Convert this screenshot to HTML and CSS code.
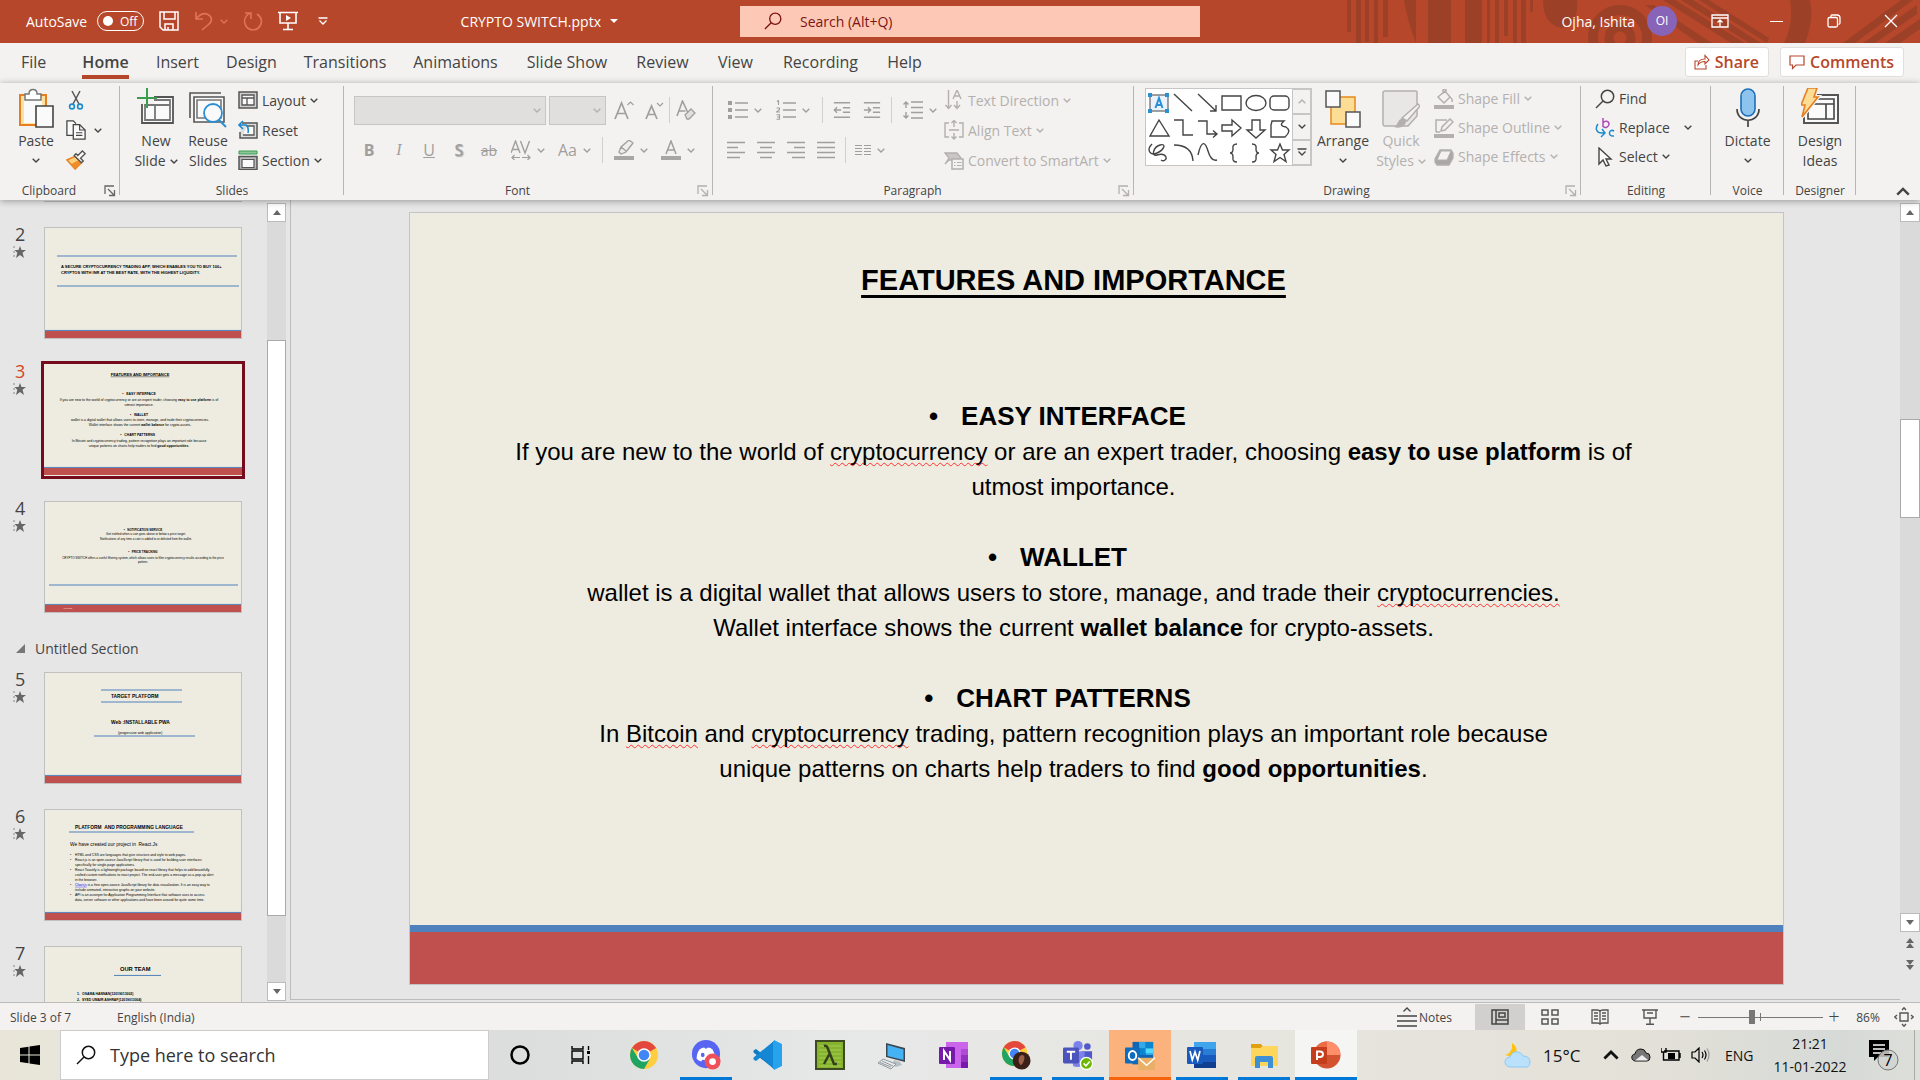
FILE: index.html
```html
<!DOCTYPE html>
<html lang="en">
<head>
<meta charset="utf-8">
<title>CRYPTO SWITCH.pptx - PowerPoint</title>
<link rel="stylesheet" href="styles.css">
</head>
<body>
<svg class="sprite" aria-hidden="true">
  <symbol id="chev" viewBox="0 0 8 5"><path d="M.7.7 4 4 7.3.7" fill="none" stroke="currentColor" stroke-width="1.4"/></symbol>
  <symbol id="launch" viewBox="0 0 12 12"><path d="M1 9V1h9M4 4l6 6M10.500 5v5.500H5" fill="none" stroke="currentColor" stroke-width="1.300"/></symbol>
  <symbol id="save" viewBox="0 0 20 20"><path d="M1 1h18v18H4l-3-3zM5 1v7h11V1M6 19v-6h8v6M9 19v-3" fill="none" stroke="currentColor" stroke-width="1.500"/></symbol>
  <symbol id="undo" viewBox="0 0 20 20"><path d="M2 1v7h7M2 8C6 3 10 2 13 3c5 2 6 7 2 10l-7 6" fill="none" stroke="currentColor" stroke-width="1.600"/></symbol>
  <symbol id="redo" viewBox="0 0 20 20"><path d="M2 2h6v6M7 2C2 5 0 10 3 15s11 5 14 0 1-9-3-12" fill="none" stroke="currentColor" stroke-width="1.600"/></symbol>
  <symbol id="present" viewBox="0 0 20 20"><path d="M0 1.500h20M2 2v10h16V2M10 12v6M5 18.500h10" fill="none" stroke="currentColor" stroke-width="1.600"/><path d="M8 4l5 3-5 3z" fill="currentColor"/></symbol>
  <symbol id="custom" viewBox="0 0 10 8"><path d="M.5 1h9M1.500 3.500 5 7l3.500-3.500" fill="none" stroke="currentColor" stroke-width="1.300"/></symbol>
  <symbol id="glass" viewBox="0 0 20 20"><circle cx="12.500" cy="7.500" r="6.200" fill="none" stroke="currentColor" stroke-width="1.500"/><path d="M8 12l-7 7" stroke="currentColor" stroke-width="1.500"/></symbol>
  <symbol id="ribbonopt" viewBox="0 0 18 14"><path d="M1 1h16v12H1zM1 4h16M9 12V6M6.500 8.500 9 6l2.500 2.500" fill="none" stroke="currentColor" stroke-width="1.300"/></symbol>
  <symbol id="restore" viewBox="0 0 14 14"><rect x="1" y="3.500" width="9.500" height="9.500" rx="1.500" fill="none" stroke="currentColor" stroke-width="1.300"/><path d="M4 3V2q0-1 1-1h5q3 0 3 3v5q0 1-1.500 1.500" fill="none" stroke="currentColor" stroke-width="1.300"/></symbol>
  <symbol id="close" viewBox="0 0 14 14"><path d="M1 1l12 12M13 1 1 13" stroke="currentColor" stroke-width="1.300"/></symbol>
  <symbol id="share" viewBox="0 0 16 16"><path d="M4 7H1v8h11v-4M4 11c0-5 3-6 7-6V1.500L15 6l-4 4V7.500C8 7.500 6 8 4 11z" fill="none" stroke="currentColor" stroke-width="1.100"/></symbol>
  <symbol id="comment" viewBox="0 0 16 16"><path d="M1 2h14v9H7l-3.500 3.500V11H1z" fill="none" stroke="currentColor" stroke-width="1.200"/></symbol>

  <symbol id="paste" viewBox="0 0 36 40"><path d="M2 7h26v30H2z" fill="#fbe2a0" stroke="#e67e22" stroke-width="2"/><path d="M6 10h18v25H6z" fill="#fafafa"/><path d="M7 12V6h4c0-6 8-6 8 0h4v6z" fill="#fff" stroke="#777" stroke-width="1.500"/><path d="M18 18h17v21H18z" fill="#fafafa" stroke="#444" stroke-width="1.600"/></symbol>
  <symbol id="cut" viewBox="0 0 20 20"><path d="M6 1l7 13M14 1 7 14" stroke="#555" stroke-width="1.500"/><g fill="none" stroke="#1e8bcd" stroke-width="1.600"><circle cx="6" cy="16.500" r="2.400"/><circle cx="14" cy="16.500" r="2.400"/></g></symbol>
  <symbol id="copy" viewBox="0 0 22 22"><path d="M8 17H1V1h7l3 3" fill="#fafafa" stroke="#444" stroke-width="1.400"/><path d="M8 5h7l6 6v10H8z" fill="#fafafa" stroke="#444" stroke-width="1.400"/><path d="M15 5v6h6M11 14h7M11 17h7" fill="none" stroke="#444" stroke-width="1.300"/></symbol>
  <symbol id="brush" viewBox="0 0 22 22"><path d="M1 11l9-4 7 7-7 7z" fill="#fbd27c" stroke="#e67e22" stroke-width="1.600"/><path d="M5 16l5 5 7-7-3-3z" fill="#f28c28"/><path d="M9 6l8 8 2-2-3-3 5-5-3-3-5 5-2-2z" fill="#fafafa" stroke="#555" stroke-width="1.500"/></symbol>
  <symbol id="newslide" viewBox="0 0 38 40"><path d="M5 9h31v26H5z" fill="#fafafa" stroke="#555" stroke-width="1.800"/><path d="M8 12h25v20H8zM8 17h25M18 17v15" fill="none" stroke="#777" stroke-width="1.800"/><path d="M3 6h14v10H3z" fill="#f3f2f1"/><path d="M10 0v20M0 10h20" stroke="#3a9d50" stroke-width="2"/></symbol>
  <symbol id="reuse" viewBox="0 0 38 40"><path d="M1 30V5h31" fill="none" stroke="#555" stroke-width="1.600"/><path d="M5 9h30v25H5z" fill="#fafafa" stroke="#555" stroke-width="1.600"/><path d="M8 12h24v18H8z" fill="none" stroke="#777" stroke-width="1.600"/><circle cx="24" cy="25" r="9" fill="#fafafa" stroke="#2b8fd4" stroke-width="1.800"/><path d="M30 32l7 7" stroke="#2b8fd4" stroke-width="2"/></symbol>
  <symbol id="layout" viewBox="0 0 20 20"><path d="M1 2h18v16H1z" fill="#d0d0d0" stroke="#555" stroke-width="1.500"/><path d="M4 5h12v10H4zM4 8h12M9 8v7" fill="#fafafa" stroke="#555" stroke-width="1.300"/></symbol>
  <symbol id="reset" viewBox="0 0 20 20"><path d="M4 3h15v15H2v-6" fill="#ddd" stroke="#555" stroke-width="1.500"/><path d="M9 6h7v9H5" fill="#fafafa" stroke="#555" stroke-width="1.300"/><path d="M1 5h7q3 2 2 8M5 1 1 5l4 4" fill="none" stroke="#1e8bcd" stroke-width="1.600"/></symbol>
  <symbol id="section" viewBox="0 0 20 20"><path d="M1 1h18v3H1z" fill="#8cc79a" stroke="#3a9d50"/><path d="M1 6.500h18v13H1z" fill="#bbb" stroke="#555" stroke-width="1.500"/><path d="M4 9.500h12v8H4z" fill="#fafafa" stroke="#555" stroke-width="1.200"/></symbol>
  <symbol id="grow" viewBox="0 0 20 20"><path d="M1 19 7.500 3 14 19M3.500 13.500h8" fill="none" stroke="currentColor" stroke-width="1.700"/><path d="M13.500 5 16.500 2l3 3" fill="none" stroke="currentColor" stroke-width="1.200"/></symbol>
  <symbol id="shrink" viewBox="0 0 20 20"><path d="M2 19 7.500 6 13 19M4 14.500h7" fill="none" stroke="currentColor" stroke-width="1.700"/><path d="M13 3l3 3 3-3" fill="none" stroke="currentColor" stroke-width="1.200"/></symbol>
  <symbol id="erase" viewBox="0 0 20 20"><path d="M1 16 6.500 1 12 13M3.500 11h6" fill="none" stroke="currentColor" stroke-width="1.600"/><path d="M9 15l6-6 4 4-6 6h-2z" fill="#e0e0e0" stroke="currentColor" stroke-width="1.300"/></symbol>
  <symbol id="spacing" viewBox="0 0 20 20"><path d="M0 13 4.500 1 9 13M1.500 9.500h6M9.500 1 14 13 18.500 1" fill="none" stroke="currentColor" stroke-width="1.400"/><path d="M1 17.500h8M11 17.500h8M3.500 15 1 17.500 3.500 20M16.500 15l2.500 2.500-2.500 2.500" fill="none" stroke="currentColor" stroke-width="1.200"/></symbol>
  <symbol id="marker" viewBox="0 0 20 20"><path d="M0 16h20v4H0z" fill="#a8a6a4"/><path d="M5 12l2-5 8-7 4 3-7 9-5 2zM7 7l5 4" fill="#eee" stroke="currentColor" stroke-width="1.300"/></symbol>
  <symbol id="fontcolor" viewBox="0 0 20 20"><path d="M0 16h20v4H0z" fill="#a8a6a4"/><path d="M5 14 10 1l5 13M6.500 10h7" fill="none" stroke="currentColor" stroke-width="1.500"/></symbol>
  <symbol id="bullets" viewBox="0 0 20 20"><path d="M7 3h13M7 10h13M7 17h13" stroke="currentColor" stroke-width="1.700"/><path d="M0 1h4v4H0zM0 8h4v4H0zM0 15h4v4H0z" fill="currentColor"/></symbol>
  <symbol id="numbers" viewBox="0 0 20 20"><path d="M7 3h13M7 10h13M7 17h13" stroke="currentColor" stroke-width="1.700"/><path d="M1 1.500 2.500.5V5M.5 8h3v1.500L.5 12h3.500M.5 14.800h3v4.500h-3M1 17h2.500" fill="none" stroke="currentColor" stroke-width="1.100"/></symbol>
  <symbol id="outdent" viewBox="0 0 20 20"><path d="M1 2h18M11 7.500h8M11 12.500h8M1 18h18M1.500 10H9M4.500 7l-3 3 3 3" fill="none" stroke="currentColor" stroke-width="1.600"/></symbol>
  <symbol id="indent" viewBox="0 0 20 20"><path d="M1 2h18M11 7.500h8M11 12.500h8M1 18h18M1 10h7.500M5.500 7l3 3-3 3" fill="none" stroke="currentColor" stroke-width="1.600"/></symbol>
  <symbol id="linesp" viewBox="0 0 20 20"><path d="M8 2h12M8 7.500h12M8 12.500h12M8 18h12M3 2v6M3 12v6M.5 4.500 3 2l2.500 2.500M.5 15.500 3 18l2.500-2.500" fill="none" stroke="currentColor" stroke-width="1.400"/></symbol>
  <symbol id="al" viewBox="0 0 18 18"><path d="M0 1.500h18M0 6.500h11M0 11.500h18M0 16.500h13" stroke="currentColor" stroke-width="1.700"/></symbol>
  <symbol id="ac" viewBox="0 0 18 18"><path d="M0 1.500h18M3 6.500h12M0 11.500h18M3 16.500h12" stroke="currentColor" stroke-width="1.700"/></symbol>
  <symbol id="ar" viewBox="0 0 18 18"><path d="M0 1.500h18M7 6.500h11M0 11.500h18M5 16.500h13" stroke="currentColor" stroke-width="1.700"/></symbol>
  <symbol id="aj" viewBox="0 0 18 18"><path d="M0 1.500h18M0 6.500h18M0 11.500h18M0 16.500h18" stroke="currentColor" stroke-width="1.700"/></symbol>
  <symbol id="cols" viewBox="0 0 16 12"><path d="M0 1.500h7M9 1.500h7M0 4.500h7M9 4.500h7M0 7.500h7M9 7.500h7M0 10.500h7M9 10.500h7" stroke="currentColor" stroke-width="1.200"/></symbol>
  <symbol id="textdir" viewBox="0 0 20 20"><path d="M4.500 0v18M1.500 15l3 3.500 3-3.500M13 11v7M10 15l3 3.500 3-3.500M9 9l4-9 4 9M10.500 6h5" fill="none" stroke="currentColor" stroke-width="1.400"/></symbol>
  <symbol id="alignt" viewBox="0 0 20 20"><path d="M5 3H1v14h4M15 3h4v14h-4M10 0v7M7.500 3 10 .5 12.500 3M10 13v6M7.500 16.500 10 19l2.500-2.500M5 10h10" fill="none" stroke="currentColor" stroke-width="1.400"/></symbol>
  <symbol id="smart" viewBox="0 0 20 20"><path d="M1 3h12l4 5-4 2H5L1 14l4-6z" fill="#c9c7c5" stroke="currentColor" stroke-width="1.300"/><path d="M8 9h11v10H8z" fill="#f3f2f1" stroke="currentColor" stroke-width="1.500"/><path d="M10 12.500h1.500M13 12.500h4.500M10 15.500h1.500M13 15.500h4.500" stroke="currentColor" stroke-width="1.200"/></symbol>
  <symbol id="arrange" viewBox="0 0 36 40"><path d="M6 9h24v27H6z" fill="#fbdd95" stroke="#e88a1a" stroke-width="1.500"/><path d="M1 3h14v16H1zM21 24h14v15H21z" fill="#fafafa" stroke="#555" stroke-width="1.500"/></symbol>
  <symbol id="quick" viewBox="0 0 38 40"><path d="M3 3h31q1 0 1 1v24l-9 10H3q-2 0-2-2V5q0-2 2-2z" fill="#e8e7e6" stroke="#b3b0ad" stroke-width="1.500"/><path d="M12 39c4-1 3-8 9-9l3 3c0 5-6 8-12 6z" fill="#b3b0ad"/><path d="M20 30 36 16l2 2-13 15z" fill="#f3f2f1" stroke="#b3b0ad" stroke-width="1.500"/></symbol>
  <symbol id="sfill" viewBox="0 0 20 20"><path d="M0 16h20v4H0z" fill="#b3b0ad"/><path d="M4 8l7-6 5 6-6 6zM9 5V1q2-2 3 0v3M16 8q3 2 2 5" fill="none" stroke="currentColor" stroke-width="1.500"/></symbol>
  <symbol id="sline" viewBox="0 0 20 20"><path d="M0 16h20v4H0z" fill="#b3b0ad"/><path d="M2 14V2h11M2 14h4M7 13l1-4 8-8 3 3-8 8z" fill="none" stroke="currentColor" stroke-width="1.500"/></symbol>
  <symbol id="sfx" viewBox="0 0 20 20"><path d="M6 3h11l2 3v5l-4 7H3l-2-3v-3z" fill="#aaa8a6" stroke="currentColor" stroke-width="1.300"/><path d="M7 4h10l-4 9H3z" fill="#f3f2f1" stroke="currentColor"/></symbol>
  <symbol id="replace" viewBox="0 0 20 20"><g fill="none" stroke-width="1.500"><path d="M8 0v9M8 5c2-3 6-2 6 1s-4 5-6 2" stroke="#b04cb8"/><path d="M19 13c-5-3-7 6 0 5M3 6c-3 4-2 9 4 9H10M7 11l3 4-4 4" stroke="#1e8bcd"/></g></symbol>
  <symbol id="select" viewBox="0 0 20 20"><path d="M4 1v16l4-4 3 6 3-1-3-6h5z" fill="#fafafa" stroke="#444" stroke-width="1.400"/></symbol>
  <symbol id="mic" viewBox="0 0 26 40"><rect x="6" y="1" width="14" height="27" rx="7" fill="#8cc4ee" stroke="#1c6fb8" stroke-width="1.600"/><path d="M2 21c0 15 22 15 22 0M13 32v7" fill="none" stroke="#444" stroke-width="1.700"/></symbol>
  <symbol id="ideas" viewBox="0 0 38 40"><path d="M3 7h34v28H3z" fill="#fafafa" stroke="#555" stroke-width="2"/><path d="M7 11h26v20H7zM12 16h21M25 16v15" fill="none" stroke="#444" stroke-width="1.600"/><path d="M7 0h9l-3 9h4L1 29l3-12H0z" fill="#fbdd95" stroke="#f3f2f1" stroke-width="4"/><path d="M7 0h9l-3 9h4L1 29l3-12H0z" fill="#fbdd95" stroke="#e67e22" stroke-width="1.600"/></symbol>
  <symbol id="star" viewBox="0 0 13 12"><path d="M7 0l1.500 4H13L9.500 6.800 11 12 7 9l-4 3 1.300-5.200L1.500 4h4z" fill="#666"/><path d="M0 1h2M0 6h2M0 10h2" stroke="#888"/></symbol>

  <symbol id="chrome" viewBox="0 0 30 30"><circle cx="15" cy="15" r="14" fill="#ffcd40"/><path d="M15 15 2.900 8A14 14 0 0 1 27.100 8z" fill="#e2483d"/><path d="M2.900 8A14 14 0 0 0 15 29l6-10.500L9 18z" fill="#1fa463"/><circle cx="15" cy="15" r="6.800" fill="#fff"/><circle cx="15" cy="15" r="5.300" fill="#4285f4"/></symbol>
</svg>

<div class="app">
<header class="titlebar">
  <svg class="pattern" viewBox="0 0 575 43" preserveAspectRatio="xMaxYMid slice" aria-hidden="true">
    <g fill="#9c4127"><path d="M2 0h4v32H2zM11 0h5v43h-5zM20 0h4v42h-4zM29 0h4v43h-4zM38 0h5v37h-5zM59 0h12v43Q62 20 59 0zM83 0h23v43H83zM120 0h17v43h-17zM142 0h3v43h-3zM150 0h4v43h-4zM159 0h4v36h-4zM168 0h4v43h-4zM176 0h5v43h-5zM185 0h3v12h-3z"/><path d="M198 0h34q2 25-16 28-18-4-18-28zM300 5h9l58 38h-14zM318 0h12l70 43h-14zM336 0h12l68 43h-12zM354 0h10l60 38-2 5zM445 0h20q4 22-5 43h-21q10-20 6-43zM498 43 556 0h12l-58 43zM518 43 572 5v9L530 43zM540 43l35-24v10l-20 14z"/></g>
    <g fill="none" stroke="#9c4127"><circle cx="275" cy="37" r="27" stroke-width="10"/><circle cx="275" cy="38" r="11" stroke-width="9"/></g>
  </svg>
  <div class="tb-left">
    <label class="autosave" for="autosave">AutoSave</label>
    <button class="toggle" id="autosave"><span class="knob"></span>Off</button>
    <button class="tbtn" aria-label="Save"><svg class="i20"><use href="#save"/></svg></button>
    <button class="tbtn dim" aria-label="Undo"><svg class="i20"><use href="#undo"/></svg><svg class="chev"><use href="#chev"/></svg></button>
    <button class="tbtn dim" aria-label="Redo"><svg class="i20"><use href="#redo"/></svg></button>
    <button class="tbtn" aria-label="From Beginning"><svg class="i20"><use href="#present"/></svg></button>
    <button class="tbtn more" aria-label="Customize"><svg class="i10"><use href="#custom"/></svg></button>
    <button class="docname">CRYPTO SWITCH.pptx<span class="caret"></span></button>
  </div>
  <div class="tsearch"><svg class="i18"><use href="#glass"/></svg><input type="text" aria-label="Search" placeholder="Search (Alt+Q)"></div>
  <div class="tb-right">
    <span class="user">Ojha, Ishita</span><span class="avatar">OI</span>
    <button class="wbtn" aria-label="Ribbon display"><svg class="wopt"><use href="#ribbonopt"/></svg></button>
    <button class="wbtn" aria-label="Minimize"><span class="minus"></span></button>
    <button class="wbtn" aria-label="Restore"><svg class="i14"><use href="#restore"/></svg></button>
    <button class="wbtn" aria-label="Close"><svg class="i14"><use href="#close"/></svg></button>
  </div>
</header>

<nav class="tabs">
  <button class="tab file">File</button><button class="tab active">Home</button><button class="tab">Insert</button><button class="tab">Design</button><button class="tab">Transitions</button><button class="tab">Animations</button><button class="tab">Slide Show</button><button class="tab">Review</button><button class="tab">View</button><button class="tab">Recording</button><button class="tab">Help</button>
  <div class="tab-actions"><button class="action"><svg class="i16"><use href="#share"/></svg>Share</button><button class="action"><svg class="i16"><use href="#comment"/></svg>Comments</button></div>
</nav>

<section class="ribbon">
  <div class="group g-clip">
    <div class="gbody">
      <button class="big w40"><svg class="pic"><use href="#paste"/></svg><span>Paste</span><svg class="chev"><use href="#chev"/></svg></button>
      <div class="rows r30">
        <button class="small" aria-label="Cut"><svg class="i20"><use href="#cut"/></svg></button>
        <button class="small" aria-label="Copy"><svg class="i20"><use href="#copy"/></svg><svg class="chev wide"><use href="#chev"/></svg></button>
        <button class="small" aria-label="Format Painter"><svg class="i20"><use href="#brush"/></svg></button>
      </div>
    </div>
    <div class="glabel">Clipboard<button class="launch" aria-label="Clipboard options"><svg><use href="#launch"/></svg></button></div>
  </div>
  <div class="group g-slides">
    <div class="gbody">
      <button class="big w56"><svg class="pic"><use href="#newslide"/></svg><span>New</span><span>Slide <svg class="chev"><use href="#chev"/></svg></span></button>
      <button class="big w48"><svg class="pic"><use href="#reuse"/></svg><span>Reuse</span><span>Slides</span></button>
      <div class="rows r30">
        <button class="small"><svg class="i20"><use href="#layout"/></svg>Layout<svg class="chev"><use href="#chev"/></svg></button>
        <button class="small"><svg class="i20"><use href="#reset"/></svg>Reset</button>
        <button class="small"><svg class="i20"><use href="#section"/></svg>Section<svg class="chev"><use href="#chev"/></svg></button>
      </div>
    </div>
    <div class="glabel">Slides</div>
  </div>
  <div class="group g-font off">
    <div class="gbody lines">
      <div class="line">
        <button class="combo face" aria-label="Font"><svg class="chev"><use href="#chev"/></svg></button><button class="combo size" aria-label="Font size"><svg class="chev"><use href="#chev"/></svg></button>
        <button class="fb" aria-label="Grow"><svg class="i20"><use href="#grow"/></svg></button><button class="fb" aria-label="Shrink"><svg class="i20"><use href="#shrink"/></svg></button><i class="sep tight"></i><button class="fb narrow" aria-label="Clear"><svg class="i20"><use href="#erase"/></svg></button>
      </div>
      <div class="line">
        <button class="fb b">B</button><button class="fb it">I</button><button class="fb u">U</button><button class="fb s">S</button><button class="fb strike">ab</button><button class="fd" aria-label="Spacing"><svg class="i20"><use href="#spacing"/></svg><svg class="chev"><use href="#chev"/></svg></button><button class="fd">Aa<svg class="chev"><use href="#chev"/></svg></button><i class="sep"></i><button class="fd" aria-label="Highlight"><svg class="i20"><use href="#marker"/></svg><svg class="chev"><use href="#chev"/></svg></button><button class="fd" aria-label="Font color"><svg class="i20"><use href="#fontcolor"/></svg><svg class="chev"><use href="#chev"/></svg></button>
      </div>
    </div>
    <div class="glabel">Font<button class="launch" aria-label="Font options"><svg><use href="#launch"/></svg></button></div>
  </div>
  <div class="group g-para off">
    <div class="gbody">
      <div class="lines">
        <div class="line">
          <button class="fd" aria-label="Bullets"><svg class="i20"><use href="#bullets"/></svg><svg class="chev"><use href="#chev"/></svg></button><button class="fd w50" aria-label="Numbering"><svg class="i20"><use href="#numbers"/></svg><svg class="chev"><use href="#chev"/></svg></button><i class="sep"></i><button class="fb" aria-label="Decrease indent"><svg class="i18"><use href="#outdent"/></svg></button><button class="fb" aria-label="Increase indent"><svg class="i18"><use href="#indent"/></svg></button><i class="sep"></i><button class="fd" aria-label="Line spacing"><svg class="i20"><use href="#linesp"/></svg><svg class="chev"><use href="#chev"/></svg></button>
        </div>
        <div class="line">
          <button class="fb" aria-label="Left"><svg class="i18"><use href="#al"/></svg></button><button class="fb" aria-label="Center"><svg class="i18"><use href="#ac"/></svg></button><button class="fb" aria-label="Right"><svg class="i18"><use href="#ar"/></svg></button><button class="fb" aria-label="Justify"><svg class="i18"><use href="#aj"/></svg></button><i class="sep"></i><button class="fd columns" aria-label="Columns"><svg class="i16"><use href="#cols"/></svg><svg class="chev"><use href="#chev"/></svg></button>
        </div>
      </div>
      <div class="rows r30">
        <button class="small"><svg class="i20"><use href="#textdir"/></svg>Text Direction<svg class="chev"><use href="#chev"/></svg></button>
        <button class="small"><svg class="i20"><use href="#alignt"/></svg>Align Text<svg class="chev"><use href="#chev"/></svg></button>
        <button class="small"><svg class="i20"><use href="#smart"/></svg>Convert to SmartArt<svg class="chev"><use href="#chev"/></svg></button>
      </div>
    </div>
    <div class="glabel">Paragraph<button class="launch" aria-label="Paragraph options"><svg><use href="#launch"/></svg></button></div>
  </div>
  <div class="group g-draw">
    <div class="gbody">
      <div class="gallery">
        <svg class="shapes" viewBox="0 0 146 76" aria-label="Shapes">
          <rect x="4" y="6" width="18" height="16" fill="#eaf3fb" stroke="#444"/><path d="M2 4h4v4H2zM19 4h4v4h-4zM2 20h4v4H2zM19 20h4v4h-4z" fill="#2b8fd4"/><path d="M9.500 19 13 9l3.500 10M10.500 16h5" fill="none" stroke="#2b8fd4" stroke-width="2"/>
          <g fill="none" stroke="#444" stroke-width="1.400"><path d="M28 5l18 17M52 5l18 17M70 16v6h-6"/><path d="M76 7h19v14H76z"/><ellipse cx="110" cy="14" rx="10" ry="7.500"/><rect x="124" y="7" width="19" height="14" rx="4"/><path d="M13 31 4 47h19zM28 31h9v15h10M52 32h9v13h9M67 41.500l4 3.500-4 3.500M76 36h10v-5l9 8-9 8v-5H76zM106 31h8v10h5l-9 8-9-8h5zM126 32h12q-6 5 2 6 6 4-1 10h-14V36z"/><path d="M6 55c-6 6-2 12 5 9s10-10 3-8-9 12-3 10 8 0 9 2-2 5-5 3M28 56q18 0 19 16M52 66c4-18 8-11 10-4s5 10 9 9M91 55q-5 0-4 5 0 4-3 4 3 0 3 4-1 5 4 5M106 55q5 0 4 5 0 4 3 4-3 0-3 4 1 5-4 5"/><path d="M134 55l2.500 6h6.500l-5 4.500 2 7-6-4-6 4 2-7-5-4.500h6.500z"/></g>
        </svg>
        <div class="gscroll"><button class="dim-s" aria-label="Up"><svg class="chev flip"><use href="#chev"/></svg></button><button aria-label="Down"><svg class="chev"><use href="#chev"/></svg></button><button aria-label="More"><svg class="i10"><use href="#custom"/></svg></button></div>
      </div>
      <button class="big w60"><svg class="pic"><use href="#arrange"/></svg><span>Arrange</span><svg class="chev"><use href="#chev"/></svg></button>
      <button class="big w56 off"><svg class="pic"><use href="#quick"/></svg><span>Quick</span><span>Styles <svg class="chev"><use href="#chev"/></svg></span></button>
      <div class="rows r29 off">
        <button class="small"><svg class="i20"><use href="#sfill"/></svg>Shape Fill<svg class="chev"><use href="#chev"/></svg></button>
        <button class="small"><svg class="i20"><use href="#sline"/></svg>Shape Outline<svg class="chev"><use href="#chev"/></svg></button>
        <button class="small"><svg class="i20"><use href="#sfx"/></svg>Shape Effects<svg class="chev"><use href="#chev"/></svg></button>
      </div>
    </div>
    <div class="glabel">Drawing<button class="launch off" aria-label="Drawing options"><svg><use href="#launch"/></svg></button></div>
  </div>
  <div class="group g-edit">
    <div class="gbody">
      <div class="rows r29">
        <button class="small"><svg class="i20"><use href="#glass"/></svg>Find</button>
        <button class="small"><svg class="i20"><use href="#replace"/></svg>Replace<svg class="chev wide"><use href="#chev"/></svg></button>
        <button class="small"><svg class="i20"><use href="#select"/></svg>Select<svg class="chev"><use href="#chev"/></svg></button>
      </div>
    </div>
    <div class="glabel">Editing</div>
  </div>
  <div class="group g-voice">
    <div class="gbody"><button class="big w60"><svg class="pic"><use href="#mic"/></svg><span>Dictate</span><svg class="chev"><use href="#chev"/></svg></button></div>
    <div class="glabel">Voice</div>
  </div>
  <div class="group g-ideas">
    <div class="gbody"><button class="big w56"><svg class="pic"><use href="#ideas"/></svg><span>Design</span><span>Ideas</span></button></div>
    <div class="glabel">Designer</div>
  </div>
  <button class="collapse" aria-label="Collapse ribbon"><svg class="chev big-chev flip"><use href="#chev"/></svg></button>
</section>

<main class="work">
  <aside class="pane">
    <div class="prev"></div>
    <div class="row"><div class="mark"><span>2</span><svg class="anim"><use href="#star"/></svg></div>
      <svg class="thumb" viewBox="0 0 1386 784"><rect width="1386" height="784" class="paper"/><path d="M91 203h1260M91 413h1274M0 724h1386" class="blue"/><g class="t28 bold"><text x="119" y="284">A SECURE CRYPTOCURRENCY TRADING APP, WHICH ENABLES YOU TO BUY 100+</text><text x="119" y="326">CRYPTOS WITH INR AT THE BEST RATE, WITH THE HIGHEST LIQUIDITY.</text></g><rect y="728" width="1386" height="49" class="red"/></svg></div>
    <div class="row"><div class="mark now"><span>3</span><svg class="anim"><use href="#star"/></svg></div>
      <svg class="thumb chosen" viewBox="0 0 1386 784"><rect width="1386" height="784" class="paper"/><g text-anchor="middle" class="t24"><text x="672" y="82" class="t28 bold under">FEATURES AND IMPORTANCE</text><text x="665" y="217" class="bold">• &#160; EASY INTERFACE</text><text x="665" y="261">If you are new to the world of cryptocurrency or are an expert trader, choosing <tspan class="bold">easy to use platform</tspan> is of</text><text x="665" y="297">utmost importance.</text><text x="665" y="364" class="bold">• &#160; WALLET</text><text x="672" y="401">wallet is a digital wallet that allows users to store, manage, and trade their cryptocurrencies.</text><text x="672" y="436">Wallet interface shows the current <tspan class="bold">wallet balance</tspan> for crypto-assets.</text><text x="655" y="505" class="bold">• &#160; CHART PATTERNS</text><text x="665" y="548">In Bitcoin and cryptocurrency trading, pattern recognition plays an important role because</text><text x="665" y="583">unique patterns on charts help traders to find <tspan class="bold">good opportunities</tspan>.</text></g><path d="M0 724h1386" class="blue"/><rect y="728" width="1386" height="49" class="red"/></svg></div>
    <div class="row"><div class="mark"><span>4</span><svg class="anim"><use href="#star"/></svg></div>
      <svg class="thumb" viewBox="0 0 1386 784"><rect width="1386" height="784" class="paper"/><g text-anchor="middle" class="t21"><text x="693" y="207" class="bold">• &#160; NOTIFICATION SERVICE</text><text x="714" y="241">Get notified when a coin goes above or below a price target.</text><text x="714" y="271">Notifications of any time a coin is added to or delisted from the wallet.</text><text x="693" y="367" class="bold">• &#160; PRICE TRACKING</text><text x="693" y="404">CRYPTO SWITCH offers a useful filtering system, which allows users to filter cryptocurrency results according to the price</text><text x="693" y="434">pattern.</text></g><path d="M35 588h1323M0 724h1386" class="blue"/><rect y="728" width="1386" height="49" class="red"/><text x="136" y="759" class="t14 pale">1/11/2022</text></svg></div>
    <button class="sect"><span class="tri"></span>Untitled Section</button>
    <div class="row"><div class="mark"><span>5</span><svg class="anim"><use href="#star"/></svg></div>
      <svg class="thumb" viewBox="0 0 1386 784"><rect width="1386" height="784" class="paper"/><path d="M399 126h567M399 210h567M350 448h707M0 724h1386" class="blue"/><text x="469" y="180" class="t34 bold">TARGET PLATFORM</text><text x="469" y="363" class="t34 bold">Web :INSTALLABLE PWA</text><text x="518" y="434" class="t24">(progressive web application)</text><rect y="728" width="1386" height="49" class="red"/></svg></div>
    <div class="row"><div class="mark"><span>6</span><svg class="anim"><use href="#star"/></svg></div>
      <svg class="thumb" viewBox="0 0 1386 784"><rect width="1386" height="784" class="paper"/><path d="M175 161h875M0 724h1386" class="blue"/><text x="217" y="137" class="t34 bold">PLATFORM &#160;AND PROGRAMMING LANGUAGE</text><text x="182" y="256" class="t34">We have created our project in &#160;React.Js</text><g class="t24"><text x="182" y="328">•</text><text x="217" y="328">HTML and CSS are languages that give structure and style to web pages.</text><text x="182" y="363">•</text><text x="217" y="363">React.js is an open-source JavaScript library that is used for building user interfaces</text><text x="217" y="398">specifically for single-page applications.</text><text x="182" y="433">•</text><text x="217" y="433">React Toastify is a lightweight package based on react library that helps to add beautifully</text><text x="217" y="468">crafted custom notifications to react project. The end-user gets a message as a pop-up alert</text><text x="217" y="503">in the browser.</text><text x="182" y="538">•</text><text x="217" y="538"><tspan class="lnk">Chart.js</tspan> is a free open-source JavaScript library for data visualization. It is an easy way to</text><text x="217" y="573">include animated, interactive graphs on your website.</text><text x="182" y="608">•</text><text x="217" y="608">API is an acronym for Application Programming Interface that software uses to access</text><text x="217" y="643">data, server software or other applications and have been around for quite some time.</text></g><rect y="728" width="1386" height="49" class="red"/></svg></div>
    <div class="row"><div class="mark"><span>7</span><svg class="anim"><use href="#star"/></svg></div>
      <svg class="thumb" viewBox="0 0 1386 784"><rect width="1386" height="784" class="paper"/><text x="532" y="175" class="t40 bold">OUR TEAM</text><path d="M490 206h329" class="blue"/><g class="t24 bold"><text x="231" y="343">1.</text><text x="266" y="343">OSAMA HANNAN(12019013002)</text><text x="231" y="385">2.</text><text x="266" y="385">SYED UMAIR ASHRAF(12019013004)</text></g></svg></div>
  </aside>
  <div class="vscroll left"><button class="sb" aria-label="Scroll up"><span class="up"></span></button><span class="track"><span class="thumbbar"></span></span><button class="sb" aria-label="Scroll down"><span class="down"></span></button></div>
  <div class="stage">
    <article class="slide">
      <h1>FEATURES AND IMPORTANCE</h1>
      <section><h2><span class="dot">•</span>EASY INTERFACE</h2><p>If you are new to the world of <span class="sp">cryptocurrency</span> or are an expert trader, choosing <b>easy to use platform</b> is of<br>utmost importance.</p></section>
      <section><h2><span class="dot">•</span>WALLET</h2><p>wallet is a digital wallet that allows users to store, manage, and trade their <span class="sp">cryptocurrencies.</span><br>Wallet interface shows the current <b>wallet balance</b> for crypto-assets.</p></section>
      <section><h2><span class="dot">•</span>CHART PATTERNS</h2><p>In <span class="sp">Bitcoin</span> and <span class="sp">cryptocurrency</span> trading, pattern recognition plays an important role because<br>unique patterns on charts help traders to find <b>good opportunities</b>.</p></section>
      <div class="base"></div>
    </article>
  </div>
  <div class="vscroll right"><button class="sb" aria-label="Scroll up"><span class="up"></span></button><span class="track"><span class="thumbbar"></span></span><button class="sb" aria-label="Scroll down"><span class="down"></span></button><button class="step" aria-label="Previous slide"><span class="up"></span><span class="up"></span></button><button class="step" aria-label="Next slide"><span class="down"></span><span class="down"></span></button></div>
</main>

<footer class="status">
  <span class="count">Slide 3 of 7</span><span class="lang">English (India)</span>
  <button class="notes"><svg viewBox="0 0 20 20" class="i20"><path d="M0 9h20M0 14h20M0 19h20M6.500 4.500 10 1l3.500 3.500" fill="none" stroke="#444" stroke-width="1.300"/></svg>Notes</button>
  <button class="view on" aria-label="Normal"><svg viewBox="0 0 18 16" class="vi"><path d="M1 1h16v14H1zM5 1v14M5 11h12M8 4h6v4H8z" fill="none" stroke="#444" stroke-width="1.500"/></svg></button>
  <button class="view" aria-label="Slide sorter"><svg viewBox="0 0 18 16" class="vi"><path d="M1 1h6v5H1zM11 1h6v5h-6zM1 10h6v5H1zM11 10h6v5h-6z" fill="none" stroke="#555" stroke-width="1.500"/></svg></button>
  <button class="view" aria-label="Reading view"><svg viewBox="0 0 18 16" class="vi"><path d="M9 2v14M1 1h5q3 0 3 2 0-2 3-2h5v13h-5q-3 0-3 1 0-1-3-1H1zM3 4h4M3 7h4M3 10h4M11 4h4M11 7h4M11 10h4" fill="none" stroke="#555" stroke-width="1.300"/></svg></button>
  <button class="view" aria-label="Slide show"><svg viewBox="0 0 18 16" class="vi"><path d="M1 1h16M3 1v8h12V1M6 4h6M9 9v6M5 15.200h8" fill="none" stroke="#555" stroke-width="1.400"/></svg></button>
  <button class="zb" aria-label="Zoom out">−</button><input class="zoom" type="range" min="10" max="163" value="76" aria-label="Zoom"><button class="zb" aria-label="Zoom in">+</button>
  <button class="pct">86%</button>
  <button class="fit" aria-label="Fit"><svg viewBox="0 0 20 20" class="i20"><path d="M6 6h8v8H6zM8 3l2-2.200L12 3M8 17l2 2.200L12 17M3 8 .8 10 3 12M17 8l2.200 2L17 12" fill="none" stroke="#555" stroke-width="1.400"/></svg></button>
</footer>

<footer class="taskbar">
  <button class="start" aria-label="Start"><svg viewBox="0 0 20 20" class="i20"><path d="M0 3l8.500-1.300v7.800H0zM9.500 1.500 20 0v9.500H9.500zM0 10.500h8.500v7.800L0 17zM9.500 10.500H20V20L9.500 18.500z"/></svg></button>
  <div class="find"><svg class="i20"><use href="#glass"/></svg><input type="text" aria-label="Windows search" placeholder="Type here to search"></div>
  <button class="app-i" aria-label="Cortana"><svg viewBox="0 0 30 30"><circle cx="15" cy="15" r="8.500" fill="none" stroke="#000" stroke-width="2.500"/></svg></button>
  <button class="app-i" aria-label="Task view"><svg viewBox="0 0 30 30"><path d="M5 6v3h11V6M5 24v-3h11v3M5 11h11v8H5zM21.500 6v4M21.500 16v8" fill="none" stroke="#000" stroke-width="1.400"/><path d="M20 11h3v3h-3z"/></svg></button>
  <button class="app-i" aria-label="Chrome"><svg viewBox="0 0 30 30"><use href="#chrome"/></svg></button>
  <button class="app-i run" aria-label="Discord"><svg viewBox="0 0 32 32"><circle cx="16" cy="15" r="15" fill="#5865f2"/><path d="M9 10q3-2 5-2l1 1h2l1-1q3 0 5 2 3 5 3 10-2 2-5 3l-1-2q-4 1-8 0l-1 2q-3-1-5-3 0-6 3-10z" fill="#fff"/><ellipse cx="12.500" cy="16" rx="2" ry="2.300" fill="#5865f2"/><circle cx="23" cy="23" r="8.500" fill="#ee5159"/><circle cx="23" cy="23" r="3.600" fill="#fff"/></svg></button>
  <button class="app-i" aria-label="Visual Studio Code"><svg viewBox="0 0 30 30"><path d="M21 1 8 13 3 9 .5 10.500v2L21 29z" fill="#0a7bc4"/><path d="M21 29 8 17l-5 4-2.500-1.500v-2L21 1z" fill="#1487d4"/><path d="M21 0l8 4v22l-8 4-1-4V4z" fill="#27a3ee"/></svg></button>
  <button class="app-i" aria-label="Lambda"><svg viewBox="0 0 30 30"><path d="M1 1h28v28H1z" fill="#86b32d" stroke="#3d4a22" stroke-width="2"/><path d="M4 6h22M4 10h22M4 14h22M4 18h22M4 22h22M4 26h22" stroke="#a7cc55"/><path d="M9 6q3-1 4 3l6 15h3M15 13 9 24" fill="none" stroke="#33401a" stroke-width="2.500"/></svg></button>
  <button class="app-i" aria-label="Remote desktop"><svg viewBox="0 0 30 30"><path d="M9 3l19 5v14L9 17z" fill="#3d474f"/><path d="M10.500 5l16 4.500v10.500l-16-4z" fill="#45b2f3"/><path d="M17 20l6 2 2 3-6 2-4-2z" fill="#b9c0c4"/><path d="M6 19l13 5-5 5-13-6z" fill="#e9ecee" stroke="#8f979c"/><path d="M5 21l11 5M3 22.500l11 4.500" stroke="#8f979c"/></svg></button>
  <button class="app-i" aria-label="OneNote"><svg viewBox="0 0 30 30"><path d="M7 2h22v26H7z" fill="#ca64ea"/><path d="M22 9h7v6h-7z" fill="#ae4bd5"/><path d="M22 15h7v7h-7z" fill="#9332bf"/><path d="M22 22h7v6h-7z" fill="#7719aa"/><rect y="7" width="16" height="17" rx="1" fill="#7719aa"/><path d="M5 20v-9l6 9v-9" fill="none" stroke="#fff" stroke-width="2"/></svg></button>
  <button class="app-i run" aria-label="Chrome profile"><svg viewBox="0 0 32 32"><use href="#chrome" width="29" height="29"/><circle cx="22" cy="22" r="9.500" fill="#3a2018"/><path d="M20 17q5-3 5 3-1 5-4 7-4-4-1-10z" fill="#9a6148"/></svg></button>
  <button class="app-i run" aria-label="Teams"><svg viewBox="0 0 32 32"><circle cx="16" cy="6" r="5" fill="#7b83eb"/><circle cx="26" cy="7" r="3.500" fill="#5059c9"/><path d="M20 12h11v9q-4 6-9 2z" fill="#5059c9"/><path d="M8 12h15v10q-3 9-12 6z" fill="#7b83eb"/><rect y="8" width="17" height="17" rx="1.500" fill="#4b53bc"/><path d="M4 12.500h9M8.500 12.500V21" stroke="#fff" stroke-width="2"/><circle cx="25" cy="25" r="6.500" fill="#6bb700" stroke="#fff" stroke-width="1.500"/><path d="M22 25l2.500 2.500L28.500 23" fill="none" stroke="#fff" stroke-width="1.700"/></svg></button>
  <button class="app-i mail" aria-label="Outlook"><svg viewBox="0 0 32 32"><path d="M8 2h22v24H8z" fill="#1066b5"/><path d="M15 2h7v7h-7zM22 9h8v7h-8z" fill="#32a9e7"/><path d="M15 9h7v7h-7zM22 2h8v7h-8z" fill="#0a86d1"/><path d="M22 9h8v5h-8z" fill="#50d9ff"/><rect y="8" width="16" height="17" rx="1" fill="#0f6cbd"/><ellipse cx="8" cy="16.500" rx="4" ry="4.800" fill="none" stroke="#fff" stroke-width="2"/><path d="M14 19h18v13H14z" fill="#e8b066"/><path d="M14 19l9 8 9-8" fill="none" stroke="#fff" stroke-width="1.500"/></svg></button>
  <button class="app-i run" aria-label="Word"><svg viewBox="0 0 30 30"><path d="M7 2h22v7H7z" fill="#41a5ee"/><path d="M7 9h22v6H7z" fill="#2b7cd3"/><path d="M7 15h22v7H7z" fill="#185abd"/><path d="M7 22h22v6H7z" fill="#103f91"/><rect y="7" width="16" height="17" rx="1" fill="#185abd"/><path d="M3 11l2.300 9L8 12l2.700 8L13 11" fill="none" stroke="#fff" stroke-width="1.700"/></svg></button>
  <button class="app-i run" aria-label="File Explorer"><svg viewBox="0 0 30 30"><path d="M2 4h10l2 3h-2v5H2z" fill="#e0a010"/><path d="M2 8h10l2-2h15v20H2z" fill="#ffd65c"/><path d="M6 28V18q0-2 2-2h14q2 0 2 2v10h-5v-6h-8v6z" fill="#3d8fd6"/></svg></button>
  <button class="app-i current" aria-label="PowerPoint"><svg viewBox="0 0 30 30"><circle cx="16" cy="15" r="13.500" fill="#d35230"/><path d="M16 1.500A13.500 13.500 0 0 1 29.500 15H16z" fill="#ff8f6b"/><path d="M16 1.500V15H2.500A13.500 13.500 0 0 1 16 1.500z" fill="#ed6c47"/><rect y="7" width="16" height="17" rx="1" fill="#c43e1c"/><path d="M6 20v-8.500h3q3 0 3 2.700T9 17H6" fill="none" stroke="#fff" stroke-width="1.900"/></svg></button>
  <div class="tray">
    <svg viewBox="0 0 28 26" class="weather"><path d="M9 1q6 4 4 10l-4 4-7-2q8-2 7-12z" fill="#ffc20e"/><path d="M7 25q-5-1-5-5t5-5q2-6 8-5 4 1 5 4 7 0 7 6t-6 5z" fill="#b9e1fb" stroke="#8ccaf5"/></svg>
    <span class="temp">15°C</span>
    <svg class="tchev"><use href="#chev"/></svg>
    <svg viewBox="0 0 20 16" class="tri20"><path d="M4 14q-4-1-3-5 1-2 3-2 1-5 6-5 4 0 5 4 4 0 4 4t-3 4z" fill="#777" stroke="#111"/><path d="M4 13.500 11 8l6 5q-1 .5-2 .5z" fill="#eee"/></svg>
    <svg viewBox="0 0 20 16" class="tri20"><path d="M3 4h15v9H5M19 6v5" fill="none" stroke="#000" stroke-width="1.400"/><path d="M7 6h7v6H7z"/><path d="M0 1v4h5V1M2.500 5v8H5" fill="none" stroke="#000" stroke-width="1.400"/></svg>
    <svg viewBox="0 0 20 16" class="tri20"><path d="M1 5v6h3l4 4V1L4 5zM11 5q2 3 0 6M13.500 3.500q3 4.500 0 9" fill="none" stroke="#000" stroke-width="1.200"/><path d="M16 1.500q4 6.500 0 13" fill="none" stroke="#999" stroke-width="1.200"/></svg>
    <span class="eng">ENG</span>
    <span class="clock"><span>21:21</span><span>11-01-2022</span></span>
    <button class="bell" aria-label="Notifications"><svg viewBox="0 0 32 32"><path d="M1 1h20v17H10l-4 4v-4H1z"/><path d="M5 6h12M5 10h12M5 14h8" stroke="#fff" stroke-width="1.400"/><circle cx="20" cy="21" r="10" fill="#d0d3d1" fill-opacity=".85" stroke="#777"/><text x="20" y="27" text-anchor="middle" class="badge">7</text></svg></button>
  </div>
</footer>
</div>
</body>
</html>
```
FILE: styles.css
```css
* { box-sizing: border-box; }
body { margin: 0; font-family: "Open Sans", "Noto Sans", sans-serif; font-size: 14px; color: #444; background: #e6e6e6; }
button, input { font: inherit; color: inherit; border: 0; background: none; padding: 0; margin: 0; }
svg { display: block; flex: none; }
.sprite { position: absolute; width: 0; height: 0; }
.app { display: grid; grid-template-rows: auto auto auto minmax(0, 1fr) auto auto; height: 100vh; overflow: hidden; }
.i20 { width: 20px; height: 20px; }
.i18 { width: 18px; height: 18px; }
.i16 { width: 16px; height: 16px; }
.i14 { width: 14px; height: 14px; }
.i10 { width: 10px; height: 8px; }
.chev { width: 8px; height: 5px; }
.flip { transform: rotate(180deg); }

/* title bar */
.titlebar { position: relative; display: grid; grid-template-columns: minmax(0, 37fr) 460px minmax(0, 36fr); height: 43px; padding-bottom: 1px; background: #b7472a; color: #fff; align-items: center; }
.pattern { position: absolute; right: 0; top: 0; width: 575px; height: 43px; }
.tb-left { display: flex; align-items: center; padding: 0 122px 0 26px; }
.autosave { width: 71px; }
.toggle { display: flex; align-items: center; gap: 7px; width: 47px; height: 20px; border: 1px solid #fff; border-radius: 10px; padding-left: 5px; font-size: 12px; }
.knob { width: 10px; height: 10px; border-radius: 50%; background: #fff; }
.tbtn { display: flex; align-items: center; gap: 6px; margin-left: 15px; }
.tbtn.more { margin-left: 20px; }
.dim { color: #e0745a; }
.docname { display: flex; align-items: center; gap: 9px; margin-left: auto; }
.caret { border: 4px solid transparent; border-top-color: #fff; border-bottom: 0; }
.tsearch { display: flex; align-items: center; gap: 18px; height: 31px; padding-left: 24px; background: #fdc9b6; color: #7c1414; }
.tsearch input { flex: 1; min-width: 0; }
input::placeholder { color: inherit; opacity: 1; }
.tb-right { position: relative; display: flex; align-items: center; justify-content: flex-end; padding-right: 1px; }
.avatar { width: 30px; height: 30px; border-radius: 50%; background: #8764b8; text-align: center; line-height: 30px; font-size: 12px; margin: 0 14px 0 12px; }
.wbtn { display: flex; justify-content: center; align-items: center; width: 57px; height: 40px; }
.wopt { width: 18px; height: 14px; }
.minus { width: 13px; height: 1px; background: #fff; }

/* tabs */
.tabs { display: grid; grid-template-columns: 60px 75px 69px 79px 108px 113px 110px 81px 65px 105px 63px 1fr; height: 40px; background: #f3f2f1; padding: 0 16px 0 8px; font-size: 16px; }
.tab { padding: 6px 0 0; height: 36px; white-space: nowrap; justify-self: center; border-bottom: 4px solid transparent; }
.tab.file { justify-self: start; margin-left: 13px; }
.tab.active { font-weight: 600; border-color: #b7472a; }
.tab-actions { display: flex; justify-content: flex-end; gap: 11px; padding-top: 4px; }
.action { display: flex; align-items: center; gap: 5px; height: 30px; padding: 0 9px 0 8px; background: #fff; border: 1px solid #e1dfdd; border-radius: 3px; color: #b7472a; font-weight: 600; font-size: 16px; }

/* ribbon */
.ribbon { position: relative; z-index: 1; display: grid; grid-template-columns: 120px 224px 369px 421px 447px 130px 73px 72px 1fr; height: 117px; background: #f3f2f1; box-shadow: 0 1px 7px rgba(0, 0, 0, .35); }
.group { position: relative; display: flex; flex-direction: column; justify-content: space-between; }
.group::after { content: ""; position: absolute; right: 0; top: 3px; height: 109px; width: 1px; background: #b8b6b4; }
.gbody { display: flex; height: 99px; }
.glabel { display: flex; justify-content: center; height: 18px; line-height: 18px; font-size: 12px; color: #444; position: relative; }
.g-clip .glabel, .g-font .glabel, .g-para .glabel, .g-draw .glabel { padding-right: 22px; }
.launch { position: absolute; right: 4px; top: 3px; color: #666; }
.launch svg { width: 12px; height: 12px; }
.off, .off .launch { color: #b3b0ad; }
.big { display: flex; flex-direction: column; align-items: center; padding-top: 5px; line-height: 20px; }
.big .pic { width: 38px; height: 40px; margin-bottom: 3px; }
.big > .chev { margin-top: 7px; }
.big span { display: flex; align-items: center; gap: 4px; }
.w40 { width: 40px; } .w48 { width: 48px; } .w56 { width: 56px; } .w60 { width: 60px; }
.rows { display: flex; flex-direction: column; padding-top: 2px; }
.small { display: flex; align-items: center; gap: 4px; white-space: nowrap; }
.r30 .small { height: 30px; }
.r29 { padding-top: 1px; }
.r29 .small { height: 29px; }
.small .wide { margin-left: 4px; }
.g-clip .gbody { padding-left: 16px; gap: 10px; }
.g-slides .gbody { padding-left: 8px; }
.g-slides .rows { margin-left: 6px; }
.lines { display: flex; flex-direction: column; gap: 10px; padding-top: 12px; }
.line { display: flex; align-items: center; height: 30px; }
.g-font .lines { padding-left: 10px; }
.combo { display: flex; align-items: center; justify-content: flex-end; height: 29px; padding-right: 4px; background: #e1dfdd; border: 1px solid #c8c6c4; margin-right: 3px; }
.face { width: 192px; }
.size { width: 57px; }
.fb { display: flex; align-items: center; justify-content: center; width: 30px; height: 30px; font-size: 16px; color: #a19f9d; }
.narrow { width: 26px; }
.fd { display: flex; align-items: center; justify-content: center; gap: 6px; width: 47px; height: 30px; font-size: 16px; color: #a19f9d; }
.w50 { width: 50px; }
.columns { width: 39px; }
.sep { width: 1px; height: 26px; background: #d2d0ce; margin: 0 4px; }
.tight { margin: 0 3px 0 0; }
.b { font-weight: 700; }
.it { font-family: "Liberation Serif", serif; font-style: italic; }
.u { text-decoration: underline; }
.s { font-weight: 600; text-shadow: 1px 1px 1px #aaa; }
.strike { text-decoration: line-through; font-size: 14px; }
.g-para .gbody { padding-left: 8px; }
.g-para .lines { width: 223px; }
.gallery { display: flex; width: 167px; height: 78px; margin: 5px 1px 0 11px; border: 1px solid #c8c6c4; background: #fff; }
.shapes { width: 146px; height: 76px; }
.gscroll { display: grid; grid-template-rows: 1fr 1fr 1fr; width: 19px; }
.gscroll button { display: flex; align-items: center; justify-content: center; border: 1px solid #c8c6c4; background: #f3f2f1; }
.gscroll .dim-s { color: #b3b0ad; }
.g-draw .rows { margin-left: 5px; }
.g-edit .gbody { padding-left: 14px; }
.g-edit .wide { margin-left: 10px; }
.g-voice .gbody, .g-ideas .gbody { justify-content: center; }
.collapse { justify-self: end; align-self: end; padding: 0 10px 4px 0; }
.big-chev { width: 14px; height: 9px; }

/* work area */
.work { display: grid; grid-template-columns: 267px 19px minmax(0, 1fr) 20px; background: #e6e6e6; border-bottom: 1px solid #bbb; }
.pane { overflow: hidden; }
.prev { width: 198px; height: 2px; margin: 0 0 25px 44px; border-bottom: 1px solid #bbb; }
.row { display: flex; align-items: flex-start; margin-bottom: 25px; }
.mark { width: 44px; padding-left: 13px; font-size: 18px; line-height: 14px; }
.mark span { display: block; padding: 0 0 5px 2px; }
.now { color: #d24726; }
.anim { width: 13px; height: 12px; }
.thumb { width: 198px; height: 112px; outline: 1px solid #c0c0c0; outline-offset: -1px; }
.chosen { outline: 3px solid #750b1c; outline-offset: 0; }
.paper { fill: #eeece1; }
.red { fill: #c0504d; }
.blue { fill: none; stroke: #4f81bd; stroke-width: 7; }
.t14 { font-size: 14px; } .t21 { font-size: 21px; } .t24 { font-size: 24px; } .t28 { font-size: 28px; } .t34 { font-size: 34px; } .t40 { font-size: 40px; }
.thumb text { font-family: "Liberation Sans", Arial, sans-serif; fill: #000; }
.thumb .pale { fill: #f3dcdb; }
.bold { font-weight: 700; }
.under { text-decoration: underline; }
.lnk { fill: #00f; text-decoration: underline; }
.sect { display: flex; align-items: center; gap: 10px; height: 24px; margin: -2px 0 12px 16px; }
.tri { border-left: 9px solid transparent; border-bottom: 9px solid #777; }
.vscroll { display: flex; flex-direction: column; align-items: stretch; padding: 3px 0 1px; }
.sb { display: flex; align-items: center; justify-content: center; height: 19px; background: #fff; border: 1px solid #bbb; }
.up { border: 4px solid transparent; border-bottom: 5px solid #666; border-top: 0; }
.down { border: 4px solid transparent; border-top: 5px solid #666; border-bottom: 0; }
.track { display: flex; flex-direction: column; flex: 1; background: #dadada; }
.thumbbar { background: #fff; border: 1px solid #aaa; }
.left .track { padding: 118px 0 66px; }
.left .thumbbar { flex: 1; }
.right .track { padding-top: 197px; }
.right .thumbbar { height: 99px; }
.step { display: flex; flex-direction: column; align-items: center; justify-content: center; height: 22px; }
.right { padding-bottom: 26px; }
.stage { margin: 0 0 2px 4px; border-left: 1px solid #bbb; border-bottom: 1px solid #bbb; padding: 12px 116px 0 118px; }
.slide { display: flex; flex-direction: column; aspect-ratio: 16 / 9; background: #eeece1; border: 1px solid #c3c3c8; color: #000; text-align: center; font-family: "Liberation Sans", Arial, sans-serif; padding-top: 45px; }
.slide h1, .slide section { padding-right: 46px; }
.slide h1 { margin: 0 0 96px; font-size: 29px; line-height: 44px; text-decoration: underline; text-decoration-thickness: 3px; text-underline-offset: 5px; text-decoration-skip-ink: none; }
.slide h2 { margin: 0; font-size: 26px; line-height: 36px; }
.slide p { margin: 0 0 35px; font-size: 24px; line-height: 35px; white-space: nowrap; }
.dot { display: inline-block; width: 32px; margin-left: -32px; text-align: left; }
.sp { text-decoration: underline wavy #f33 1px; text-underline-offset: 2px; text-decoration-skip-ink: none; }
.base { margin-top: auto; height: 59px; background: #c0504d; border-top: 7px solid #4f81bd; }

/* status bar */
.status { display: flex; align-items: center; height: 27px; padding: 1px 6px 0 0; background: #f3f2f1; font-size: 12px; }
.count { width: 107px; margin-left: 10px; }
.lang { flex: 1; }
.notes { display: flex; align-items: center; gap: 2px; margin-right: 23px; }
.view { display: flex; align-items: center; justify-content: center; width: 50px; height: 26px; }
.on { background: #d2d0ce; }
.vi { width: 18px; height: 16px; }
.zb { width: 20px; font-size: 20px; line-height: 24px; font-weight: 300; }
.zoom { appearance: none; width: 125px; height: 14px; margin: 0 1px 0 3px; background: linear-gradient(#777, #777) 0 7px / 100% 1px no-repeat, linear-gradient(#777, #777) 50% 50% / 1px 8px no-repeat; }
.zoom::-webkit-slider-thumb { appearance: none; width: 6px; height: 14px; background: #777; }
.pct { width: 47px; padding-left: 1px; }
.fit { margin-left: 3px; }

/* taskbar */
.taskbar { display: flex; height: 50px; background: linear-gradient(90deg, #e9e6d9, #dcdddd 27%, #e7e8e8 45%, #e6e5df 65%, #e4e1d8 85%, #d6dad7 96%, #dddfd9); color: #111; }
.start { display: flex; align-items: center; justify-content: center; width: 60px; }
.find { display: flex; align-items: center; gap: 14px; width: 429px; height: 50px; padding-left: 15px; background: #fff; border: 1px solid #ccc; }
.find input { flex: 1; min-width: 0; font-size: 18px; color: #333; }
.app-i { display: flex; align-items: center; justify-content: center; width: 62px; border-bottom: 3px solid transparent; padding-top: 3px; }
.app-i svg { width: 30px; height: 30px; }
.run { width: 52px; margin: 0 5px; border-color: #0078d7; }
.mail { background: #fbb27c; border-color: #f7630c; }
.current { background: #f5f5f3; border-color: #0078d7; }
.tray { display: flex; align-items: center; margin-left: auto; border-right: 1px solid #aaa; margin-right: 5px; }
.weather { width: 28px; height: 26px; margin-right: 12px; }
.temp { width: 60px; font-size: 17px; }
.tchev { width: 16px; height: 10px; margin-right: 12px; transform: rotate(180deg); }
.tri20 { width: 20px; height: 16px; margin-right: 10px; }
.eng { width: 48px; margin-left: 4px; }
.clock { display: flex; flex-direction: column; align-items: center; width: 74px; line-height: 23px; }
.bell { margin: 0 14px 0 21px; }
.bell svg { width: 32px; height: 32px; }
.badge { font-size: 16px; }
```
